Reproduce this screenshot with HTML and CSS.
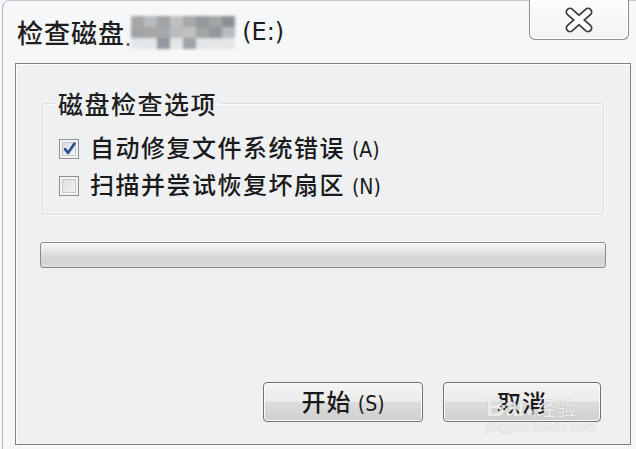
FILE: index.html
```html
<!DOCTYPE html>
<html lang="zh-CN">
<head>
<meta charset="utf-8">
<title>检查磁盘</title>
<link rel="stylesheet" href="styles.css">
</head>
<body>
<div class="window">
  <div class="titlebar">
    <div class="title">
      <span class="title-text">检查磁盘</span>
      <span class="dot">.</span>
      <span class="mosaic" aria-hidden="true">
        <i class="m1"></i><i class="m2"></i><i class="m3"></i><i class="m4"></i><i class="m5"></i><i class="m6"></i><i class="m7"></i><i class="m8"></i>
        <i class="m3"></i><i class="m1"></i><i class="m5"></i><i class="m2"></i><i class="m4"></i><i class="m7"></i><i class="m6"></i><i class="m2"></i>
        <i class="m9"></i><i class="m9"></i><i class="m6"></i><i class="m9"></i><i class="m3"></i><i class="m9"></i><i class="m9"></i><i class="m9"></i>
      </span>
      <span class="drive">(E:)</span>
    </div>
    <div class="close">
      <svg width="36" height="28" viewBox="0 0 36 28">
        <path d="M9 6 L27 22 M27 6 L9 22" stroke="#3a3a3a" stroke-width="9" stroke-linecap="round"/>
        <path d="M9 6 L27 22 M27 6 L9 22" stroke="#ffffff" stroke-width="5.5" stroke-linecap="round"/>
      </svg>
    </div>
  </div>
  <div class="client">
    <fieldset class="group">
      <legend class="legend">磁盘检查选项</legend>
      <label class="row">
        <span class="box">
          <svg width="15" height="15" viewBox="0 0 15 15"><path d="M3 8 L6 12 L12.5 2.5" fill="none" stroke="#2a4c94" stroke-width="2.6" stroke-linecap="round" stroke-linejoin="round"/></svg>
        </span>
        <span class="label">自动修复文件系统错误 <span class="key">(A)</span></span>
      </label>
      <label class="row">
        <span class="box"></span>
        <span class="label">扫描并尝试恢复坏扇区 <span class="key">(N)</span></span>
      </label>
    </fieldset>
    <div class="progress"></div>
    <div class="buttons">
      <button class="btn">开始 <span class="key">(S)</span></button>
      <button class="btn">取消</button>
    </div>
    <div class="watermark" aria-hidden="true">
      <span class="wm-bai">Bai</span><span class="wm-paw">●</span><span class="wm-jy">经验</span>
      <div class="wm-url">jingyan.baidu.com</div>
    </div>
  </div>
</div>
</body>
</html>
```
FILE: styles.css
```css
html, body {
  margin: 0;
  padding: 0;
}
body {
  width: 636px;
  height: 449px;
  overflow: hidden;
  background: #f3f5f8;
  font-family: "Noto Sans CJK SC", "Noto Sans", sans-serif;
  color: #1c1c1c;
}
.window {
  position: relative;
  height: 449px;
  margin-left: 2px;
  border-left: 1px solid #b4b8bd;
  border-top: 1px solid #c4c7cb;
  border-top-left-radius: 8px;
  background: #f6f7f9;
  box-sizing: border-box;
  display: flex;
  flex-direction: column;
}
.titlebar {
  height: 62px;
  display: flex;
  align-items: flex-start;
}
.title {
  display: flex;
  align-items: center;
  height: 62px;
  padding-left: 14px;
}
.title-text {
  font-size: 26px;
  font-weight: 500;
  letter-spacing: 1px;
  line-height: 30px;
  color: #1e1e1e;
}
.dot {
  font-size: 22px;
  margin-top: 8px;
  color: #555;
}
.mosaic {
  display: grid;
  grid-template-columns: repeat(8, 13px);
  grid-auto-rows: 11px;
  margin-right: 7px;
  filter: blur(1.5px);
}
.mosaic i { display: block; }
.m1 { background: #a9a6a8; }
.m2 { background: #b8bcc0; }
.m3 { background: #9ea3a6; }
.m4 { background: #c2c0bf; }
.m5 { background: #a3a8ab; }
.m6 { background: #8f999e; }
.m7 { background: #a2a6a4; }
.m8 { background: #8b9096; }
.m9 { background: #e4e6e8; }
.drive {
  font-family: "DejaVu Sans", sans-serif;
  font-size: 24px;
  line-height: 30px;
  color: #1e1e1e;
}
.close {
  margin-left: auto;
  margin-right: 7px;
  margin-top: -1px;
  width: 100px;
  height: 40px;
  box-sizing: border-box;
  border: 1px solid #8a8d91;
  border-top: none;
  border-radius: 0 0 6px 6px;
  background: linear-gradient(#fbfcfd, #f1f3f5);
  box-shadow: inset 0 0 0 1px #ffffff;
  display: flex;
  align-items: center;
  justify-content: center;
}
.client {
  position: relative;
  flex: 1;
  margin: 0 5px 4px 12px;
  border: 1px solid #80838a;
  background: #eff0f2;
  display: flex;
  flex-direction: column;
  box-shadow: inset 1px 1px 0 #ffffff;
}
.group {
  margin: 26px 26px 0 26px;
  padding: 14px 10px 10px 11px;
  border: 1px solid #d9dde1;
  border-radius: 3px;
  box-shadow: inset 1px 1px 0 #fbfcfd, 1px 1px 0 #fbfcfd;
  min-width: 0;
}
.legend {
  padding: 0 4px;
  font-size: 25px;
  font-weight: 500;
  line-height: 26px;
  letter-spacing: 1.5px;
  color: #1e1e1e;
}
.row {
  display: flex;
  align-items: center;
  height: 37px;
  padding-left: 5px;
}
.box {
  width: 20px;
  height: 20px;
  box-sizing: border-box;
  border: 1px solid #8e9194;
  background: linear-gradient(135deg, #d6d8db, #f7f7f7);
  box-shadow: inset 0 0 0 2px #f3f3f3, inset 0 0 0 3px #c7c9cc;
  display: flex;
  align-items: center;
  justify-content: center;
  margin-right: 11px;
}
.label {
  font-size: 24px;
  font-weight: 500;
  line-height: 30px;
  letter-spacing: 1.5px;
  color: #1a1a1a;
  white-space: nowrap;
}
.key {
  font-family: "DejaVu Sans Condensed", "DejaVu Sans", sans-serif;
  font-weight: normal;
  font-size: 21px;
  letter-spacing: 0;
}
.progress {
  margin: 27px 24px 0 24px;
  height: 26px;
  box-sizing: border-box;
  border: 1px solid #8a8c8f;
  border-radius: 3px;
  background: linear-gradient(#f6f6f6 0%, #e8e8e8 30%, #d7d7d7 55%, #d3d3d3 80%, #dedede 100%);
  box-shadow: inset 0 1px 0 #ffffff;
}
.buttons {
  margin-top: auto;
  display: flex;
  justify-content: flex-end;
  gap: 20px;
  padding: 0 29px 22px 0;
}
.btn {
  width: 160px;
  height: 40px;
  border: 1px solid #6f7275;
  border-radius: 4px;
  background: linear-gradient(#f4f4f4 0%, #ececec 48%, #dcdcdc 52%, #cfcfcf 100%);
  box-shadow: inset 0 0 0 1px #fbfbfb;
  font-family: "Noto Sans CJK SC", sans-serif;
  font-size: 24px;
  font-weight: 500;
  line-height: 30px;
  letter-spacing: 1px;
  color: #1a1a1a;
  padding: 0;
}
.btn + .btn { width: 158px; }
.watermark {
  position: absolute;
  right: 30px;
  bottom: 10px;
  width: 114px;
  color: rgba(255, 255, 255, 0.78);
  text-shadow: 0 0 1px rgba(120, 120, 120, 0.5);
  font-family: "Liberation Sans", sans-serif;
  pointer-events: none;
  text-align: left;
}
.wm-bai {
  font-size: 26px;
  font-weight: bold;
  letter-spacing: -1px;
}
.wm-paw {
  font-size: 14px;
  margin: 0 2px;
}
.wm-jy {
  font-family: "Noto Sans CJK SC", sans-serif;
  font-size: 20px;
}
.wm-url {
  font-size: 13px;
  margin-top: -4px;
  letter-spacing: 0.3px;
}
```
